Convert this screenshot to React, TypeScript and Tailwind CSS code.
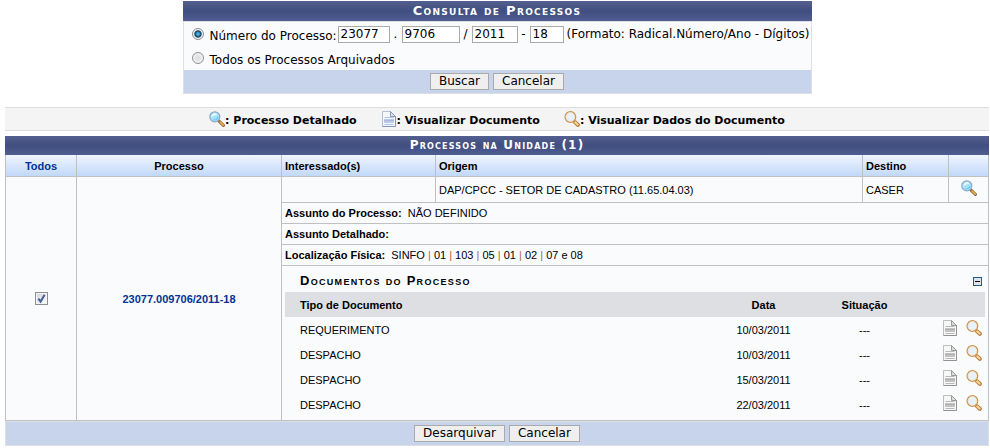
import { useState, type ReactNode } from "react";

const verdana = "font-['Verdana','DejaVu_Sans',sans-serif]";
const captionStyle =
  "bg-linear-to-b from-[#53608f] via-[#404e80] to-[#505d91] text-center font-bold tracking-widest text-white [font-variant:small-caps]";
const buttonStyle =
  "h-[17px] border border-[#aaaaaa] bg-[#efefef] px-2 text-[12px] leading-[15px] text-black";
const fieldStyle = "h-[17px] border border-[#aaaaaa] bg-white px-[2px] text-[12px] leading-[15px] text-black";
const radioStyle =
  "size-3 shrink-0 appearance-none rounded-full border border-[#8e8f8f] bg-radial from-[#dcdcdc] to-[#f6f6f6] shadow-[inset_0_0_0_1px_#f4f4f4] checked:from-[#3fb4e6] checked:from-15% checked:via-[#123a5e] checked:via-45% checked:to-[#e8ecef] checked:to-60%";

function BlueLens() {
  return (
    <svg width="16" height="16" viewBox="0 0 16 16" aria-hidden="true">
      <path d="M10 10.2 L14.4 14.4" stroke="#8a6436" strokeWidth="3" strokeLinecap="round" />
      <path d="M11 11 L14.3 14.1" stroke="#f3b64f" strokeWidth="1.5" strokeLinecap="round" />
      <circle cx="5.8" cy="5.8" r="5" fill="#a5e2fb" stroke="#8fa9c8" strokeWidth="1.2" />
      <path d="M2.3 6.2 A3.6 3.6 0 0 1 8.6 3.5 Q5 4 2.3 6.2Z" fill="#eefaff" />
      <path d="M4 9 Q8 9.4 9.2 5.6" stroke="#6cc8f2" strokeWidth="1.2" fill="none" />
    </svg>
  );
}

function AmberLens() {
  return (
    <svg width="16" height="16" viewBox="0 0 16 16" aria-hidden="true">
      <path d="M11.2 11.4 L13.8 13.8" stroke="#b9763a" strokeWidth="4" strokeLinecap="round" />
      <path d="M11.2 11.4 L13.6 13.5" stroke="#f5d592" strokeWidth="2.2" strokeLinecap="round" />
      <circle cx="6.4" cy="6" r="5.3" fill="#e6f2fd" stroke="#c9904f" strokeWidth="1.3" />
      <circle cx="6.4" cy="6" r="4.4" fill="none" stroke="#f3dfb8" strokeWidth="0.7" />
    </svg>
  );
}

function PageIcon({ blue = false }: { blue?: boolean }) {
  const edge = blue ? "#8593b4" : "#929292";
  const fill = blue ? "#f3f7ff" : "#f7f7f7";
  const lines = blue ? "#a3b2d6" : "#a9a9a9";
  return (
    <svg width="16" height="16" viewBox="0 0 16 16" aria-hidden="true">
      <path d="M1.5 0.5 H9.5 L14.5 5.5 V15.5 H1.5Z" fill={fill} stroke={blue ? "#b3bfd9" : "#bdbdbd"} />
      <path d="M14.5 5 V15.5 H1.5" fill="none" stroke={edge} />
      <path d="M9.5 0.5 V5.5 H14.5Z" fill={blue ? "#d5dff2" : "#dedede"} stroke={edge} strokeWidth="0.9" />
      <path d="M3.5 6.5 H12.5 M3.5 13.5 H12.5" stroke={lines} strokeWidth="0.8" />
      <rect x="3" y="8" width="10" height="4" fill={blue ? "#bccae8" : "#c3c3c3"} />
      <path d="M3 9.5 H13" stroke={lines} strokeWidth="0.8" />
    </svg>
  );
}

const documents = [
  { type: "REQUERIMENTO", date: "10/03/2011" },
  { type: "DESPACHO", date: "10/03/2011" },
  { type: "DESPACHO", date: "15/03/2011" },
  { type: "DESPACHO", date: "22/03/2011" },
];

function SearchForm() {
  return (
    <form className={`mx-auto w-[629px] ${verdana}`} onSubmit={(e) => e.preventDefault()}>
      <h2 className={`h-5 text-[13px] leading-5 ${captionStyle}`}>Consulta de Processos</h2>
      <div className="border border-[#dedfe3] bg-[#fafbfd] text-[12px]">
        <div className="flex h-6 items-center pl-2">
          <input id="by-number" type="radio" name="mode" defaultChecked className={radioStyle} />
          <label htmlFor="by-number" className="w-[134px] shrink-0 pt-1 pl-[6px] whitespace-nowrap">
            Número do Processo:
          </label>
          <input aria-label="Radical" defaultValue="23077" className={`w-[52px] ${fieldStyle}`} />
          <span className="w-3 text-center">.</span>
          <input aria-label="Número" defaultValue="9706" className={`w-[58px] ${fieldStyle}`} />
          <span className="w-3 text-center">/</span>
          <input aria-label="Ano" defaultValue="2011" className={`w-[46px] ${fieldStyle}`} />
          <span className="w-3 text-center">-</span>
          <input aria-label="Dígitos" defaultValue="18" className={`w-[34px] ${fieldStyle}`} />
          <span className="pl-[3px] whitespace-nowrap">(Formato: Radical.Número/Ano - Dígitos)</span>
        </div>
        <div className="flex h-6 items-center pl-2">
          <input id="all-archived" type="radio" name="mode" className={radioStyle} />
          <label htmlFor="all-archived" className="pt-1 pl-[6px]">
            Todos os Processos Arquivados
          </label>
        </div>
        <div className="flex h-[23px] items-center justify-center gap-1 bg-[#c8d4ec]">
          <button type="submit" className={buttonStyle}>Buscar</button>
          <button type="button" className={buttonStyle}>Cancelar</button>
        </div>
      </div>
    </form>
  );
}

function Legend() {
  return (
    <div
      className={`flex h-6 items-center justify-center gap-6 border-y border-[#dddddd] bg-[#f4f4f4] text-[11px] font-bold ${verdana}`}
    >
      <span className="flex items-center"><BlueLens /><span className="pt-1">: Processo Detalhado</span></span>
      <span className="flex items-center"><PageIcon blue /><span className="pt-1">: Visualizar Documento</span></span>
      <span className="flex items-center"><AmberLens /><span className="pt-1">: Visualizar Dados do Documento</span></span>
    </div>
  );
}

function DetailRow({ label, children }: { label: string; children?: ReactNode }) {
  return (
    <tr className="h-[21px]">
      <td colSpan={4} className="border-r border-b border-[#c0c0c0] px-[3px]">
        <b>{label}</b>
        <span className="pl-[6px]">{children}</span>
      </td>
    </tr>
  );
}

function Documents() {
  const [open, setOpen] = useState(true);
  return (
    <div className="px-[3px] pb-[3px]">
      <div className="flex h-[26px] items-center justify-between pt-1 pr-[3px] pl-[15px]">
        <h3 className="text-[13px] font-bold tracking-widest [font-variant:small-caps]">Documentos do Processo</h3>
        <button
          type="button"
          aria-label="Recolher documentos"
          onClick={() => setOpen(!open)}
          className="flex size-[9px] items-center justify-center border border-[#1d5c8d] bg-[#dfe3e8]"
        >
          <span className="h-px w-[5px] bg-black" />
        </button>
      </div>
      {open && (
        <table className="w-full table-fixed border-separate border-spacing-0">
          <colgroup>
            <col />
            <col className="w-[101px]" />
            <col className="w-[101px]" />
            <col className="w-[70px]" />
          </colgroup>
          <thead>
            <tr className="h-[25px] bg-[#dedfe3]">
              <th className="pl-[15px] text-left">Tipo de Documento</th>
              <th>Data</th>
              <th>Situação</th>
              <th />
            </tr>
          </thead>
          <tbody>
            {documents.map((doc, i) => (
              <tr key={i} className="h-[25px]">
                <td className="pl-[15px]">{doc.type}</td>
                <td className="text-center">{doc.date}</td>
                <td className="text-center">---</td>
                <td>
                  <div className="flex justify-end gap-2 pr-[3px] pb-1">
                    <a href="#documento" aria-label="Visualizar Documento"><PageIcon /></a>
                    <a href="#dados" aria-label="Visualizar Dados do Documento"><AmberLens /></a>
                  </div>
                </td>
              </tr>
            ))}
          </tbody>
        </table>
      )}
    </div>
  );
}

function ProcessTable() {
  const cell = "border-r border-b border-[#c0c0c0]";
  return (
    <table className="w-full table-fixed border-separate border-spacing-0 bg-[#fafbfd] text-[11px] leading-[14px]">
      <caption className={`h-[19px] text-[12px] leading-[19px] ${captionStyle} ${verdana}`}>
        Processos na Unidade (1)
      </caption>
      <colgroup>
        <col className="w-[72px]" />
        <col className="w-[205px]" />
        <col className="w-[154px]" />
        <col />
        <col className="w-[86px]" />
        <col className="w-[40px]" />
      </colgroup>
      <thead>
        <tr className="h-[22px] bg-linear-to-b from-[#f0f5ff] to-[#bfd7f8]">
          <th className={`border-l ${cell}`}>
            <a href="#todos" className="text-[#003395]">Todos</a>
          </th>
          <th className={cell}>Processo</th>
          <th className={`px-[3px] text-left ${cell}`}>Interessado(s)</th>
          <th className={`px-[3px] text-left ${cell}`}>Origem</th>
          <th className={`px-[3px] text-left ${cell}`}>Destino</th>
          <th className={cell} />
        </tr>
      </thead>
      <tbody>
        <tr className="h-[26px]">
          <td rowSpan={5} className={`border-l ${cell}`}>
            <div className="mx-auto grid size-[13px]">
              <input
                type="checkbox"
                aria-label="Selecionar processo 23077.009706/2011-18"
                defaultChecked
                className="peer col-start-1 row-start-1 size-[13px] appearance-none border border-[#8e8f8f] bg-linear-to-br from-[#cfd3dc] to-white shadow-[inset_0_0_0_1px_#f4f4f4]"
              />
              <svg
                viewBox="0 0 13 13"
                aria-hidden="true"
                className="pointer-events-none invisible col-start-1 row-start-1 size-[13px] peer-checked:visible"
              >
                <path d="M3.4 6.6 L5.6 9.6 L9.6 2.8" fill="none" stroke="#4a5f97" strokeWidth="2" />
              </svg>
            </div>
          </td>
          <td rowSpan={5} className={`text-center ${cell}`}>
            <a href="#processo" className="font-bold text-[#003395]">23077.009706/2011-18</a>
          </td>
          <td className={cell} />
          <td className={`px-[3px] ${cell}`}>DAP/CPCC - SETOR DE CADASTRO (11.65.04.03)</td>
          <td className={`px-[3px] ${cell}`}>CASER</td>
          <td className={cell}>
            <a href="#detalhado" aria-label="Processo Detalhado" className="flex justify-center pb-1"><BlueLens /></a>
          </td>
        </tr>
        <DetailRow label="Assunto do Processo:">NÃO DEFINIDO</DetailRow>
        <DetailRow label="Assunto Detalhado:" />
        <DetailRow label="Localização Física:">
          {["SINFO", "01", "103", "05", "01", "02", "07 e 08"].map((part, i) => (
            <span key={i}>{i > 0 && <span className="text-[#a86a35]"> | </span>}{part}</span>
          ))}
        </DetailRow>
        <tr>
          <td colSpan={4} className={cell}><Documents /></td>
        </tr>
      </tbody>
      <tfoot>
        <tr className="h-[25px]">
          <td colSpan={6} className="border border-[#dedfe3] bg-[#c8d4ec]">
            <div className={`flex justify-center gap-1 ${verdana}`}>
              <button type="button" className={buttonStyle}>Desarquivar</button>
              <button type="button" className={buttonStyle}>Cancelar</button>
            </div>
          </td>
        </tr>
      </tfoot>
    </table>
  );
}

export default function App() {
  return (
    <main className="bg-white pt-px pr-px pl-[5px] font-['Arial','Liberation_Sans',sans-serif] text-black">
      <SearchForm />
      <div className="pt-[13px] pb-[5px]"><Legend /></div>
      <ProcessTable />
    </main>
  );
}
